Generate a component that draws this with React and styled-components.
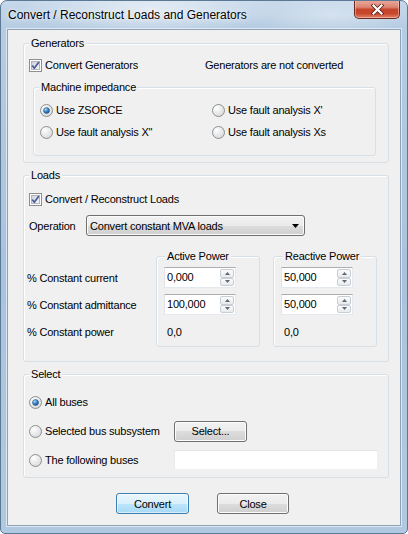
import React from 'react';
import styled, { createGlobalStyle } from 'styled-components';

const GlobalStyle = createGlobalStyle`
  html, body { margin: 0; padding: 0; width: 408px; height: 534px; overflow: hidden; background: #fff; }
  body { font-family: "Liberation Sans", Arial, sans-serif; font-size: 11px; color: #000; letter-spacing: -0.2px; }
  * { box-sizing: border-box; }
`;

const Window = styled.div`
  width: 408px;
  height: 534px;
  display: flex;
  flex-direction: column;
  border: 1px solid #5b7894;
  border-radius: 7px 7px 5px 5px;
  overflow: hidden;
  background:
    radial-gradient(ellipse 130px 26px at 150px 8px, rgba(255,255,255,0.55), rgba(255,255,255,0) 100%),
    radial-gradient(ellipse 80px 20px at 330px 14px, rgba(255,255,255,0.35), rgba(255,255,255,0) 100%),
    linear-gradient(180deg, #c6d8ea 0px, #b6cce2 28px, #aac3dc 50%, #b1c9e0 100%);
`;

const TitleBar = styled.div`
  height: 28px;
  flex: none;
  display: flex;
  align-items: center;
  padding: 0 7px;
`;

const Title = styled.div`
  flex: 1;
  font-size: 12px;
  letter-spacing: 0;
  color: #000;
  text-shadow: 0 0 6px rgba(255,255,255,0.9), 0 0 2px rgba(255,255,255,0.8);
  padding-left: 0;
`;

const CloseButton = styled.div`
  align-self: flex-start;
  width: 46px;
  height: 19px;
  margin-top: -1px;
  border: 1px solid #6a2a20;
  border-top: none;
  border-radius: 0 0 5px 5px;
  background: linear-gradient(180deg, #e9ab9e 0%, #dc8573 40%, #c5452d 52%, #c8472b 75%, #e0836a 100%);
  box-shadow: inset 0 0 0 1px rgba(255,220,210,0.45);
  display: flex;
  align-items: center;
  justify-content: center;
`;

const Client = styled.div`
  flex: 1;
  margin: 0 6px 7px;
  border: 1px solid #8ea3b9;
  box-shadow: 0 0 0 1px rgba(255,255,255,0.55);
  background: #f0f0f0;
  display: flex;
  flex-direction: column;
  padding: 0 11px 0 15px;
`;

const Group = styled.fieldset`
  margin: ${p => p.$m || '0'};
  padding: ${p => p.$p || '0'};
  border: 1px solid #d5dfe5;
  border-radius: 3px;
  box-shadow: inset 1px 1px 0 #fff;
  min-width: 0;
  ${p => (p.$w ? `width: ${p.$w}px; flex: none;` : '')}
`;

const Legend = styled.legend`
  padding: 0 2px;
  margin-left: ${p => p.$ml || 0}px;
  line-height: 13px;
  background: #f0f0f0;
`;

const CheckRow = styled.div`
  display: grid;
  grid-template-columns: ${p => p.$col || 'auto'} 1fr;
  align-items: center;
  height: 16px;
`;

const Option = styled.label`
  display: flex;
  align-items: center;
  gap: 3px;
  white-space: nowrap;
  height: 16px;
`;

const RadioGrid = styled.div`
  display: grid;
  grid-template-columns: 172px 1fr;
  grid-auto-rows: 16px;
  row-gap: 6px;
  align-items: center;
`;

const OperationRow = styled.div`
  display: flex;
  align-items: center;
  margin-top: 8px;
  height: 21px;
`;

const FieldLabel = styled.span`
  width: ${p => p.$w}px;
  flex: none;
`;

const Combo = styled.div`
  width: 219px;
  height: 21px;
  border: 1px solid #707070;
  border-radius: 3px;
  background: linear-gradient(180deg, #f2f2f2 0%, #ebebeb 50%, #dddddd 50%, #cfcfcf 100%);
  box-shadow: inset 0 0 0 1px #fcfcfc;
  display: flex;
  align-items: center;
  justify-content: space-between;
  padding: 0 5px 0 3px;
`;

const PowerArea = styled.div`
  display: flex;
  align-items: flex-start;
  margin-top: 14px;
  gap: 13px;
`;

const LabelColumn = styled.div`
  width: 129px;
  margin-left: -2px;
  margin-right: -13px;
  padding-top: 14px;
  flex: none;
  display: flex;
  flex-direction: column;
`;

const GridRow = styled.div`
  height: 27px;
  display: flex;
  align-items: center;
`;

const Spin = styled.div`
  width: 72px;
  height: 21px;
  background: #fff;
  border: 1px solid;
  border-color: #abadb3 #e3e9ef #e3e9ef #e2e3ea;
  display: flex;
  align-items: stretch;
`;

const SpinText = styled.span`
  flex: 1;
  padding-left: 2px;
  line-height: 19px;
`;

const SpinButtons = styled.div`
  width: 14px;
  margin: 1px;
  display: flex;
  flex-direction: column;
`;

const SpinBtn = styled.div`
  flex: 1;
  border: 1px solid #c9ced6;
  border-radius: 2px;
  background: linear-gradient(180deg, #fbfbfb 0%, #e8eaec 100%);
  display: flex;
  align-items: center;
  justify-content: center;
`;

const Value = styled.span`
  padding-left: 3px;
`;

const SelectGrid = styled.div`
  display: grid;
  grid-template-columns: 145px 1fr;
  grid-auto-rows: 22px;
  row-gap: 7px;
  align-items: center;
`;

const Button = styled.div`
  width: ${p => p.$w || 73}px;
  height: 21px;
  border: 1px solid ${p => (p.$default ? '#3c7fb1' : '#707070')};
  border-radius: 3px;
  background: ${p =>
    p.$default
      ? 'linear-gradient(180deg, #eaf6fd 0%, #d9f0fc 50%, #bee6fd 50%, #a7d9f5 100%)'
      : 'linear-gradient(180deg, #f2f2f2 0%, #ebebeb 50%, #dddddd 50%, #cfcfcf 100%)'};
  box-shadow: inset 0 0 0 1px ${p => (p.$default ? 'rgba(255,255,255,0.55)' : '#fcfcfc')};
  display: flex;
  align-items: center;
  justify-content: center;
`;

const TextBox = styled.div`
  height: 20px;
  background: #fff;
  border: 1px solid;
  border-color: #e3e6ea #edf0f3 #edf0f3 #e8ebee;
`;

const ButtonRow = styled.div`
  display: flex;
  justify-content: center;
  gap: 28px;
  margin-top: 15px;
  padding-right: 7px;
`;

const CheckIcon = () => (
  <svg width="13" height="13" viewBox="0 0 13 13">
    <defs>
      <linearGradient id="cbg" x1="0" y1="0" x2="1" y2="1">
        <stop offset="0" stopColor="#cdd1d7" />
        <stop offset="1" stopColor="#f7f7f8" />
      </linearGradient>
    </defs>
    <rect x="0.5" y="0.5" width="12" height="12" fill="#fff" stroke="#8e8f8f" />
    <rect x="2.5" y="2.5" width="8" height="8" fill="url(#cbg)" stroke="#b3b7bd" />
    <path d="M3.2 6.4 L5.3 9.2 L9.9 3" fill="none" stroke="#4b5e9a" strokeWidth="1.7" strokeLinejoin="round" />
  </svg>
);

const RadioIcon = ({ on }) => (
  <svg width="13" height="13" viewBox="0 0 13 13">
    <defs>
      <radialGradient id="rbg" cx="0.35" cy="0.3" r="0.8">
        <stop offset="0" stopColor="#ffffff" />
        <stop offset="1" stopColor="#d4d6d9" />
      </radialGradient>
      <radialGradient id="rdot" cx="0.35" cy="0.3" r="0.75">
        <stop offset="0" stopColor="#a6dcfb" />
        <stop offset="0.55" stopColor="#3b82c0" />
        <stop offset="1" stopColor="#14507f" />
      </radialGradient>
    </defs>
    <circle cx="6.5" cy="6.5" r="6" fill="url(#rbg)" stroke="#8e8f8f" />
    {on && <circle cx="6.5" cy="6.5" r="3" fill="url(#rdot)" stroke="#2b5f8c" strokeWidth="0.6" />}
  </svg>
);

const Arrow = ({ up }) => (
  <svg width="5" height="3" viewBox="0 0 5 3">
    <path d={up ? 'M0 3 L2.5 0 L5 3 Z' : 'M0 0 L2.5 3 L5 0 Z'} fill="#5b6878" />
  </svg>
);

const SpinBox = ({ value }) => (
  <Spin>
    <SpinText>{value}</SpinText>
    <SpinButtons>
      <SpinBtn><Arrow up /></SpinBtn>
      <SpinBtn><Arrow /></SpinBtn>
    </SpinButtons>
  </Spin>
);

export default function App() {
  return (
    <>
      <GlobalStyle />
      <Window>
        <TitleBar>
          <Title>Convert / Reconstruct Loads and Generators</Title>
          <CloseButton>
            <svg width="13" height="11" viewBox="0 0 13 11">
              <path d="M2.5 1.5 L10.5 9.5 M10.5 1.5 L2.5 9.5" stroke="#5a1d14" strokeWidth="3.8" strokeLinecap="square" />
              <path d="M2.5 1.5 L10.5 9.5 M10.5 1.5 L2.5 9.5" stroke="#ffffff" strokeWidth="2.2" strokeLinecap="square" />
            </svg>
          </CloseButton>
        </TitleBar>
        <Client>
          <Group $m="7px 0 0 0" $p="7px 12px 6px 5px">
            <Legend>Generators</Legend>
            <CheckRow $col="176px">
              <Option><CheckIcon />Convert Generators</Option>
              <span>Generators are not converted</span>
            </CheckRow>
            <Group $m="8px 0 0 4px" $p="8px 6px 15px 6px">
              <Legend $ml={-1}>Machine impedance</Legend>
              <RadioGrid>
                <Option><RadioIcon on />Use ZSORCE</Option>
                <Option><RadioIcon />Use fault analysis X'</Option>
                <Option><RadioIcon />Use fault analysis X"</Option>
                <Option><RadioIcon />Use fault analysis Xs</Option>
              </RadioGrid>
            </Group>
          </Group>

          <Group $m="6px 0 0 0" $p="9px 11px 14px 5px">
            <Legend>Loads</Legend>
            <CheckRow>
              <Option><CheckIcon />Convert / Reconstruct Loads</Option>
            </CheckRow>
            <OperationRow>
              <FieldLabel $w={57}>Operation</FieldLabel>
              <Combo>
                <span>Convert constant MVA loads</span>
                <svg width="7" height="4" viewBox="0 0 7 4"><path d="M0 0 L7 0 L3.5 4 Z" fill="#000" /></svg>
              </Combo>
            </OperationRow>
            <PowerArea>
              <LabelColumn>
                <GridRow>% Constant current</GridRow>
                <GridRow>% Constant admittance</GridRow>
                <GridRow>% Constant power</GridRow>
              </LabelColumn>
              <Group $w={104} $p="1px 6px 1px 7px">
                <Legend $ml={1}>Active Power</Legend>
                <GridRow><SpinBox value="0,000" /></GridRow>
                <GridRow><SpinBox value="100,000" /></GridRow>
                <GridRow><Value>0,0</Value></GridRow>
              </Group>
              <Group $w={104} $p="1px 6px 1px 7px">
                <Legend $ml={2}>Reactive Power</Legend>
                <GridRow><SpinBox value="50,000" /></GridRow>
                <GridRow><SpinBox value="50,000" /></GridRow>
                <GridRow><Value>0,0</Value></GridRow>
              </Group>
            </PowerArea>
          </Group>

          <Group $m="6px 0 0 0" $p="10px 10px 6px 5px">
            <Legend>Select</Legend>
            <SelectGrid>
              <Option><RadioIcon on />All buses</Option>
              <span />
              <Option><RadioIcon />Selected bus subsystem</Option>
              <Button $w={73}>Select...</Button>
              <Option><RadioIcon />The following buses</Option>
              <TextBox />
            </SelectGrid>
          </Group>

          <ButtonRow>
            <Button $default $w={73}>Convert</Button>
            <Button $w={72}>Close</Button>
          </ButtonRow>
        </Client>
      </Window>
    </>
  );
}
